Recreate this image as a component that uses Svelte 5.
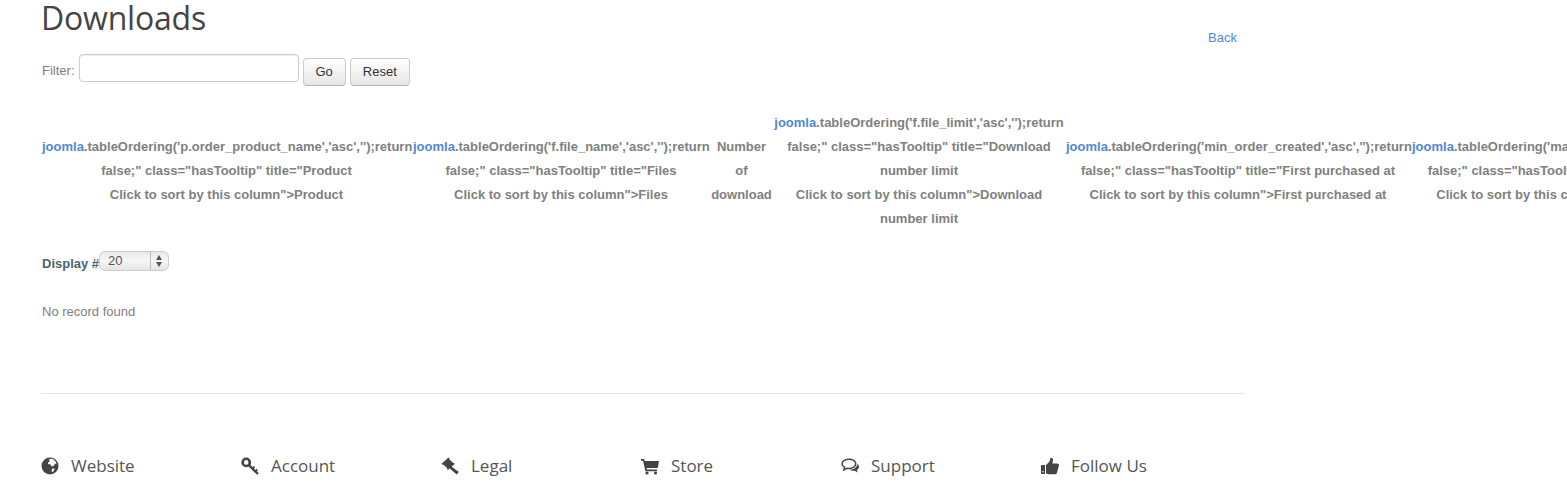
<script>
	// Table header cells, each one holds the broken link markup as its visible text
	const columns = [
		{ width: 369, lines: ["tableOrdering('p.order_product_name','asc','');return", `false;" class="hasTooltip" title="Product`, `Click to sort by this column">Product`] },
		{ width: 296, lines: ["tableOrdering('f.file_name','asc','');return", `false;" class="hasTooltip" title="Files`, `Click to sort by this column">Files`] },
		{ width: 61, plain: ['Number', 'of', 'download'] },
		{ width: 290, lines: ["tableOrdering('f.file_limit','asc','');return", `false;" class="hasTooltip" title="Download`, 'number limit', `Click to sort by this column">Download`, 'number limit'] },
		{ width: 344, lines: ["tableOrdering('min_order_created','asc','');return", `false;" class="hasTooltip" title="First purchased at`, `Click to sort by this column">First purchased at`] },
		{ width: 344, lines: ["tableOrdering('max_order_created','asc','');return", `false;" class="hasTooltip" title="Last purchased at`, `Click to sort by this column">Last purchased at`] }
	];

	const footerLinks = ['Website', 'Account', 'Legal', 'Store', 'Support', 'Follow Us'];
</script>

<main>
	<div class="top">
		<h1>Downloads</h1>
		<a class="back" href="#back">Back</a>
	</div>

	<form class="filter" onsubmit={(e) => e.preventDefault()}>
		<label for="search">Filter:</label>
		<input id="search" type="text" />
		<button type="submit">Go</button>
		<button type="reset">Reset</button>
	</form>

	<div class="heads">
		{#each columns as col}
			<div class="head" style="width: {col.width}px">
				{#if col.plain}
					{#each col.plain as line}<span>{line}</span>{/each}
				{:else}
					{#each col.lines as line, i}
						<span>{#if i === 0}<a href="#sort">joomla</a>.{/if}{line}</span>
					{/each}
				{/if}
			</div>
		{/each}
	</div>

	<div class="limit">
		<label for="limit">Display #</label>
		<span class="select-wrap">
			<select id="limit">
				<option>20</option>
			</select>
			<span class="arrows"></span>
		</span>
	</div>

	<p class="empty">No record found</p>

	<hr />

	<footer>
		{#each footerLinks as name, i}
			<div class="link">
				<svg viewBox="0 0 18 18" width="18" height="18" fill="#444" aria-hidden="true">
					{#if i === 0}
						<circle cx="9" cy="9" r="8.500" />
						<path fill="#fff" d="M8 2.200 11.500 1.800 14.600 4.400 15.600 7.200 13.700 6.400 13.200 8.600 10.800 9.400 9.400 7.600 7.200 7.100 7 5.600 8.800 4.400ZM11 11.400 13.800 11.800 12 15 10.600 14.400Z" />
					{:else if i === 1}
						<circle cx="5.200" cy="5.400" r="3.600" fill="none" stroke="#444" stroke-width="2.600" />
						<path fill="none" stroke="#444" stroke-width="2.400" d="M7.800 8.200 17 17" />
						<path fill="none" stroke="#444" stroke-width="1.800" d="M11.500 11.500 13.500 9.800M14.300 14.200 16.300 12.500" />
					{:else if i === 2}
						<path d="M7.500.5 8.700 1.700 8.300 2.300 12.100 6.100 12.700 5.700 13.600 6.900 7 13 5.900 12 6.300 11.300 2.300 7.500 1.700 7.900.5 6.800Z" />
						<path d="M9.500 8.800 17.800 15 15.600 17.600 7.800 10.600Z" />
					{:else if i === 3}
						<path d="M0 2h3.200l.5 2H18l-1.200 7H5.600l.3 1.500H16v1.700H4.400L2 3.700H0Z" />
						<circle cx="6" cy="16" r="1.600" />
						<circle cx="14.500" cy="16" r="1.600" />
					{:else if i === 4}
						<path fill="none" stroke="#444" stroke-width="1.500" d="M8 2.200c3.900 0 6.800 2 6.800 4.600S11.900 11.400 8 11.400c-.8 0-1.500-.1-2.200-.2L3 13l.5-2.900C1.900 9.300 1 8.100 1 6.800 1 4.200 4.100 2.200 8 2.200Z" />
						<path d="M16.300 6.800c1 .8 1.700 1.900 1.700 3 0 1.200-.8 2.400-2 3.100l.6 2.600-3-1.700c-1.500.2-3.600-.2-5-1 4.300-.1 8-2.700 7.700-6Z" />
					{:else}
						<path d="M0 8h4v9H0Z" />
						<path d="M5 8.300 8.500 4.500 9.500.8c1.800-.2 2.700 1 2.500 2.600L11.300 6.500h4.700c1.500 0 2.200 1.200 1.800 2.400l-1.800 6.800C15.600 16.800 14.800 17.200 13.800 17.200H8C6.800 17.200 6 16.800 5 16.300Z" />
						<circle fill="#fff" cx="2" cy="14.800" r=".8" />
					{/if}
				</svg>
				<span>{name}</span>
			</div>
		{/each}
	</footer>
</main>

<style>
	:global(body) {
		margin: 0;
		background: #fff;
		overflow: hidden;
	}

	main {
		font-family: 'Liberation Sans', Arial, sans-serif;
		font-size: 13px;
		color: #808080;
		width: 1204px;
		margin-left: 41px;
	}

	a {
		color: #5088d8;
		text-decoration: none;
	}

	.top {
		display: flex;
		justify-content: space-between;
		height: 54px;
	}

	h1 {
		margin: 0;
		font-family: 'Open Sans', sans-serif;
		font-size: 32px;
		font-weight: 400;
		line-height: 36px;
		letter-spacing: -0.2px;
		color: #444;
	}

	.back {
		margin: 30px 8px 0 0;
		line-height: 16px;
	}

	.filter {
		display: flex;
		align-items: flex-start;
		margin-left: 1px;
	}

	.filter label {
		line-height: 16px;
		margin-top: 9px;
		margin-right: 4px;
	}

	input {
		box-sizing: border-box;
		width: 220px;
		height: 28px;
		margin-right: 4px;
		border: 1px solid #ccc;
		border-radius: 4px;
		box-shadow: inset 0 1px 1px rgba(0, 0, 0, 0.075);
	}

	button {
		box-sizing: border-box;
		height: 28px;
		margin: 4px 4px 0 0;
		padding: 0 12px 2px;
		font: 13px 'Liberation Sans', Arial, sans-serif;
		color: #333;
		background: linear-gradient(#fff, #e6e6e6);
		border: 1px solid #ccc;
		border-bottom-color: #b3b3b3;
		border-radius: 4px;
	}

	.heads {
		display: flex;
		align-items: center;
		width: max-content;
		gap: 2px;
		margin: 25px 0 0 1px;
		font-weight: 700;
		line-height: 24px;
		text-align: center;
	}

	.head {
		flex: none;
		display: flex;
		flex-direction: column;
		white-space: nowrap;
	}

	.limit {
		display: flex;
		align-items: flex-start;
		margin: 20px 0 0 1px;
		height: 20px;
		font-weight: 700;
		line-height: 26px;
		color: #4a646e;
	}

	.select-wrap {
		position: relative;
		display: block;
	}

	select {
		display: block;
		appearance: none;
		box-sizing: border-box;
		width: 70px;
		height: 20px;
		padding: 0 0 2px 8px;
		font: 13px 'Liberation Sans', Arial, sans-serif;
		color: #555;
		background: linear-gradient(#e9e9e9, #f6f6f6 50%, #e4e4e4);
		border: 1px solid #ccc;
		border-radius: 6px;
	}

	.arrows {
		position: absolute;
		top: 1px;
		right: 1px;
		width: 17px;
		height: 18px;
		border-left: 1px solid #bbb;
	}

	.arrows::before,
	.arrows::after {
		content: '';
		position: absolute;
		left: 5px;
		border-left: 3px solid transparent;
		border-right: 3px solid transparent;
	}

	.arrows::before {
		top: 3px;
		border-bottom: 5px solid #555;
	}

	.arrows::after {
		top: 10px;
		border-top: 5px solid #555;
	}

	.empty {
		margin: 33px 0 0 1px;
		line-height: 16px;
	}

	hr {
		margin: 73px 0 0;
		border: 0;
		border-top: 1px solid #e5e5e5;
	}

	footer {
		display: grid;
		grid-template-columns: repeat(6, 200px);
		margin-top: 61px;
	}

	.link {
		display: flex;
		align-items: center;
		gap: 12px;
		font-family: 'Open Sans', sans-serif;
		font-size: 17px;
		line-height: 22px;
		color: #555;
	}
</style>
